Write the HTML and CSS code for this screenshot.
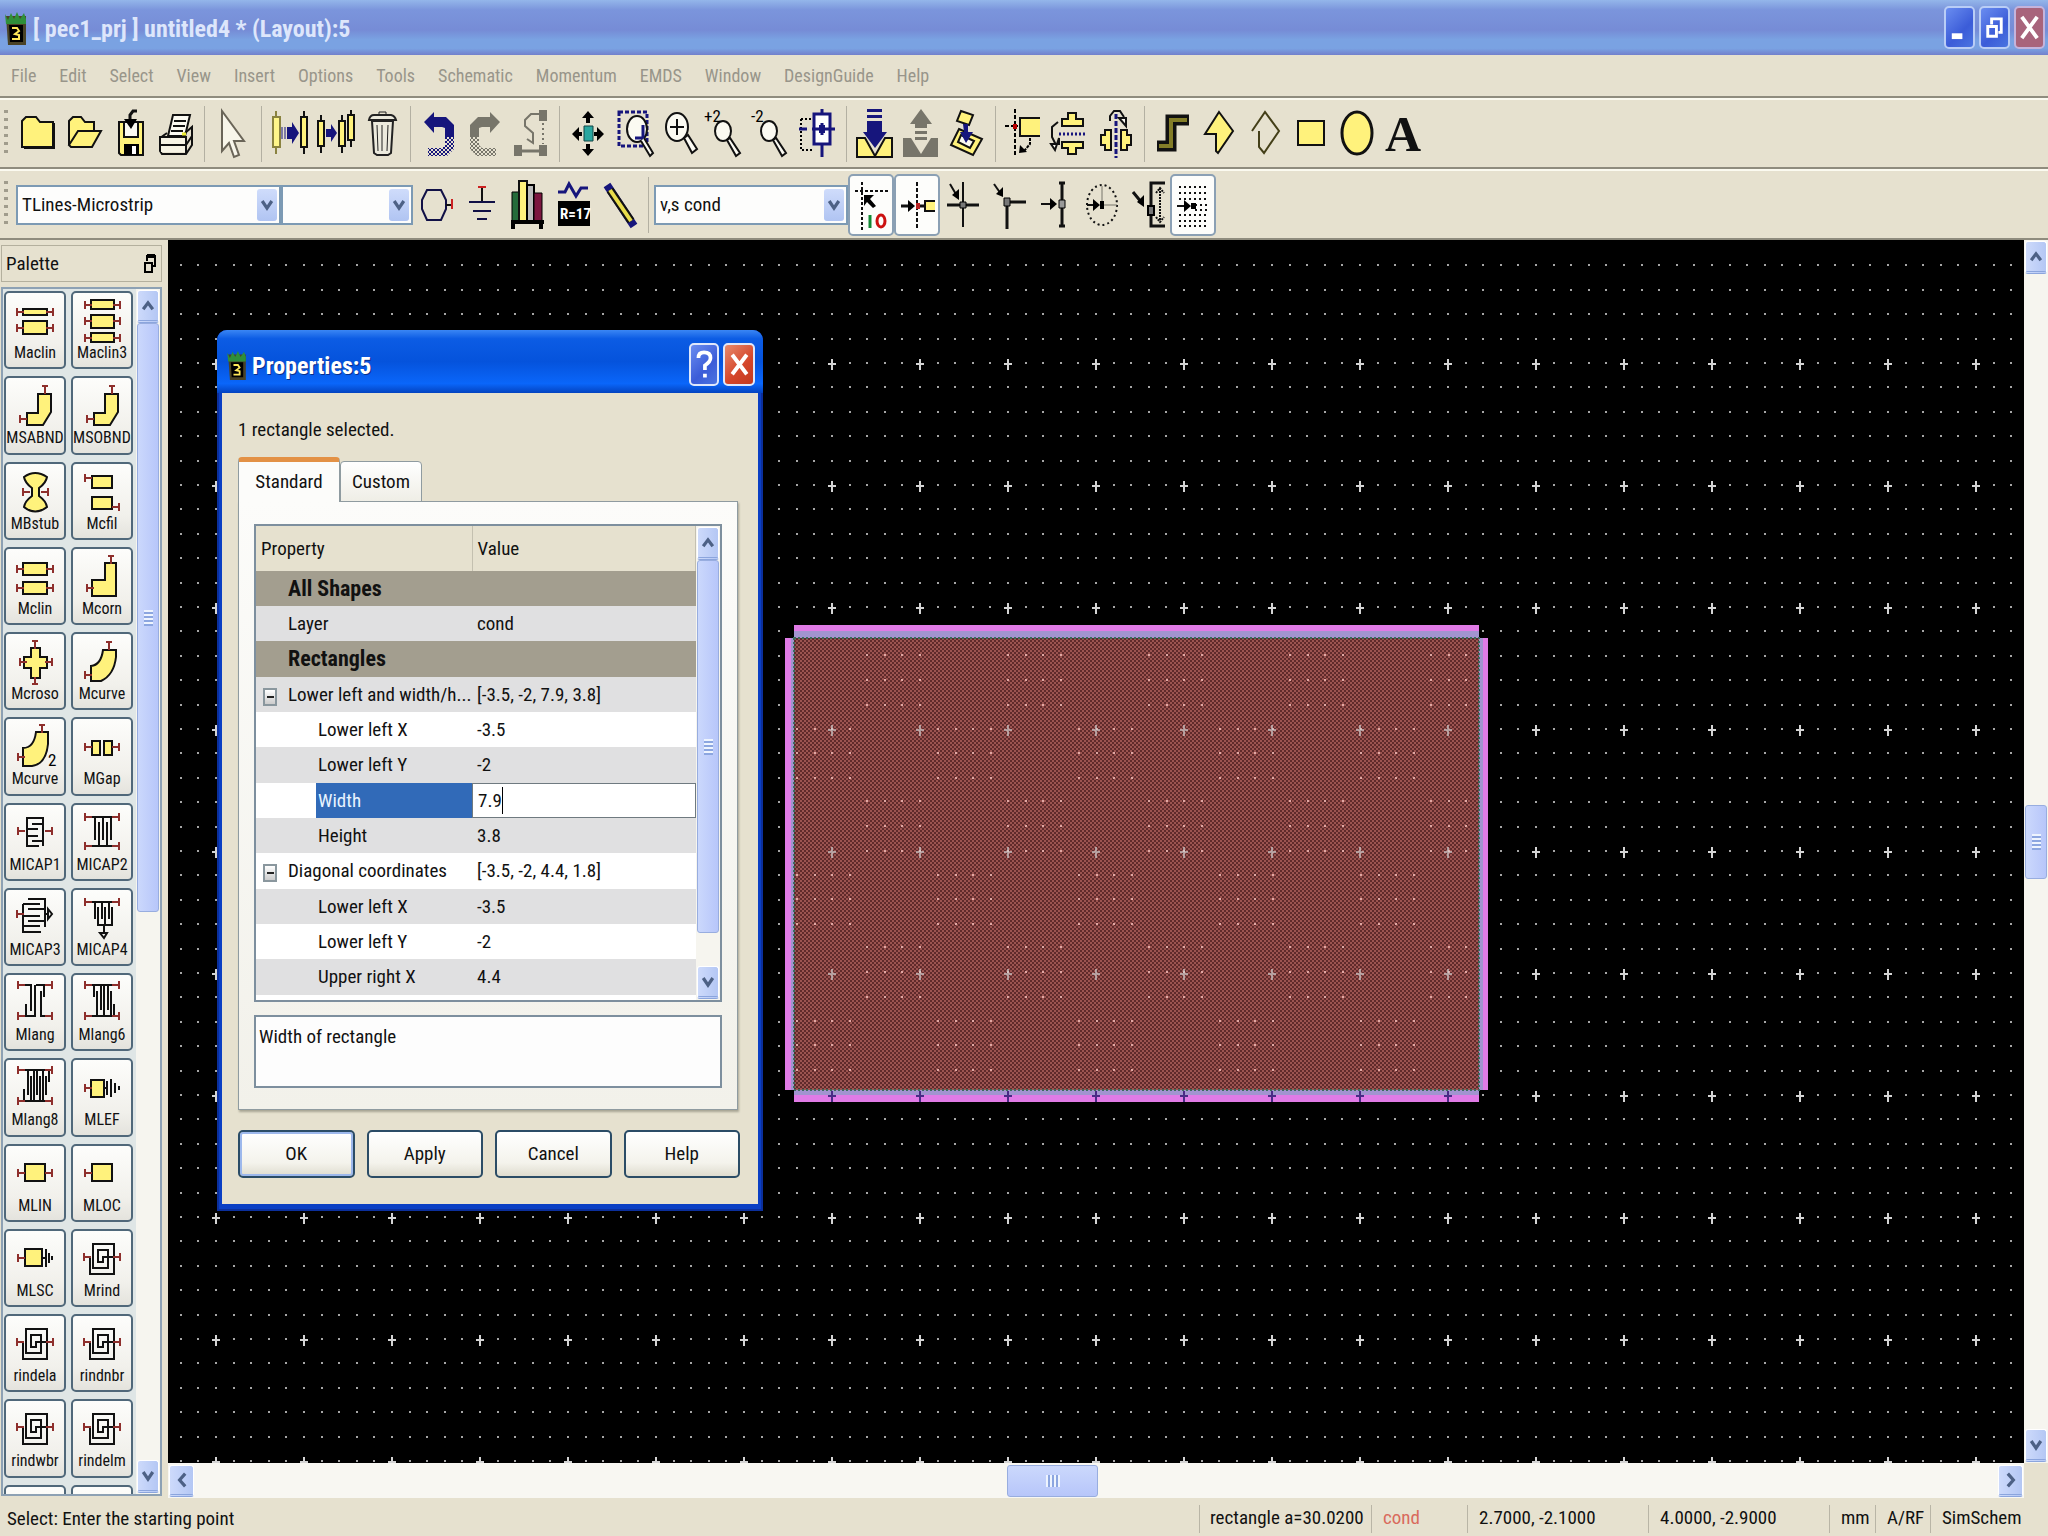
FILE: index.html
```html
<!DOCTYPE html>
<html lang="en">
<head>
<meta charset="utf-8">
<title>[ pec1_prj ] untitled4 * (Layout):5</title>
<link rel="stylesheet" href="styles.css">
</head>
<body>
<svg class="defs" aria-hidden="true">
  <defs>
    <g id="pl" class="pin"><path d="M0 0H7M0 -4V4"/></g>
    <g id="pr" class="pin"><path d="M0 0H7M7 -4V4"/></g>
    <g id="pt" class="pin"><path d="M0 0V8M-3 0H3"/></g>
    <g id="pb" class="pin"><path d="M0 0V7M-3 7H3"/></g>
    <symbol id="up" viewBox="0 0 20 20"><path d="M4 14L10 6L16 14" fill="none" stroke="#4d6185" stroke-width="4"/></symbol>
    <symbol id="down" viewBox="0 0 20 20"><path d="M4 5L10 14L16 5" fill="none" stroke="#4d6185" stroke-width="4"/></symbol>
    <symbol id="left" viewBox="0 0 20 20"><path d="M14 2L7 10L14 18" fill="none" stroke="#4d6185" stroke-width="4"/></symbol>
    <symbol id="right" viewBox="0 0 20 20"><path d="M6 2L13 10L6 18" fill="none" stroke="#4d6185" stroke-width="4"/></symbol>
    <symbol id="app" viewBox="0 0 22 34"><path d="M1 5H21V34H3Z" fill="#4a4326"/><path d="M0 3L3 9L6 2L9 8L12 1L15 8L19 2L21 8V13H1Z" fill="#2f8f3a"/><path d="M4 14H18V31H5Z" fill="#000"/><path d="M7 17L12 17L14 20L10 23L14 24V28H7" fill="none" stroke="#ffe95a" stroke-width="2"/></symbol>
    <symbol id="ind" viewBox="0 0 62 52"><path d="M16 27H19V44H43V14H22V38H37V20H27V32H32V27H44" class="ln"/><use href="#pl" x="13" y="27"/><use href="#pr" x="42" y="27"/></symbol>
    <symbol id="mag" viewBox="0 0 44 50"><ellipse cx="19" cy="22" rx="8" ry="10" class="w"/><path d="M23 31L32 47L36 44L26 29Z" class="w"/></symbol>
    <pattern id="dither" width="4" height="4" patternUnits="userSpaceOnUse"><path d="M0 0H4V4H0Z" fill="#602a2b"/><path d="M0 0H2V2H0ZM2 2H4V4H2Z" fill="#9c5451"/></pattern>
    <pattern id="half" width="4" height="4" patternUnits="userSpaceOnUse"><path d="M0 0H2V2H0ZM2 2H4V4H2Z" fill="#16157c"/></pattern>
    <pattern id="halfg" width="4" height="4" patternUnits="userSpaceOnUse"><path d="M0 0H2V2H0ZM2 2H4V4H2Z" fill="#77756a"/></pattern>
  </defs>
</svg>

<div class="window">
  <header class="titlebar">
    <svg class="app-icon"><use href="#app"/></svg>
    <h1>[ pec1_prj ] untitled4 * (Layout):5</h1>
    <div class="winbtns">
      <button class="wb" aria-label="Minimize"><svg viewBox="0 0 28 40"><path d="M6 26H17V32H6Z" fill="#fff"/></svg></button>
      <button class="wb" aria-label="Restore"><svg viewBox="0 0 28 40"><path d="M11 17V11H21V25H18M11 11H21" fill="none" stroke="#fff" stroke-width="3"/><path d="M7 19H16V29H7Z" fill="none" stroke="#fff" stroke-width="3"/></svg></button>
      <button class="wb close dim" aria-label="Close"><svg viewBox="0 0 28 40"><path d="M6 9L22 31M22 9L6 31" stroke="#fff" stroke-width="4"/></svg></button>
    </div>
  </header>

  <nav class="menubar">
    <a href="#">File</a><a href="#">Edit</a><a href="#">Select</a><a href="#">View</a><a href="#">Insert</a><a href="#">Options</a><a href="#">Tools</a><a href="#">Schematic</a><a href="#">Momentum</a><a href="#">EMDS</a><a href="#">Window</a><a href="#">DesignGuide</a><a href="#">Help</a>
  </nav>

  <div class="toolbar">
    <span class="grip"></span>
    <button class="tb" aria-label="New"><svg viewBox="0 0 44 50"><path d="M6 12L10 8H20L24 13H37V38H6Z" class="y"/><path d="M8 39H38V14" class="k"/></svg></button>
    <button class="tb" aria-label="Open"><svg viewBox="0 0 44 50"><path d="M7 36V12L11 8H19L23 13H32V21" class="y"/><path d="M7 36L16 22H39L30 38H9Z" class="y"/></svg></button>
    <button class="tb" aria-label="Save"><svg viewBox="0 0 44 50"><path d="M11 13H35V46H13L11 44Z" class="y"/><path d="M16 13H30V28H16Z" class="w"/><path d="M16 35H31V46H16Z" fill="#000"/><path d="M24 37H28V45H24Z" fill="#fff"/><path d="M29 2H25L22 6V12" class="k3"/><path d="M16 10H29L23 20Z"/></svg></button>
    <button class="tb" aria-label="Print"><svg viewBox="0 0 44 50"><path d="M14 27L19 6H36L31 27Z" class="w"/><path d="M20 12H32M19 17H31M17 22H29" class="k"/><path d="M6 29L13 24M31 24L38 18V36L32 45H8L6 42V28H32V44M6 36H32L38 27" class="k"/><path d="M7 29H31V35H7ZM7 37H31V43H7Z" fill="#f6f3e4"/><path d="M28 25H32" stroke="#ee3" stroke-width="3"/></svg></button>
    <i class="sep"></i>
    <button class="tb" aria-label="Select"><svg viewBox="0 0 44 50"><path d="M11 2V42L18 34L23 48L28 46L23 32H33Z" fill="#f8f6ea" stroke="#6a6558" stroke-width="2"/></svg></button>
    <i class="sep"></i>
    <button class="tb" aria-label="Move"><svg viewBox="0 0 44 50"><path d="M8 2V8M8 38V45" stroke="#8a8340" stroke-width="2"/><path d="M5 8H12V38H5Z" fill="#fff68a" stroke="#8a8340" stroke-width="2"/><path d="M14 18V30M17 18V30" stroke="#16157c" stroke-width="1"/><path d="M19 18H24V13L31 24L24 35V30H19Z" fill="#16157c"/><path d="M36 2V8M36 38V45" class="k"/><path d="M33 8H39V38H33Z" class="y"/></svg></button>
    <button class="tb" aria-label="Copy"><svg viewBox="0 0 44 50"><path d="M7 6V12M7 37V44M28 6V12M28 37V44M37 1V6M37 31V38" class="k"/><path d="M4 12H10V37H4ZM25 12H31V37H25ZM34 6H40V31H34Z" class="y"/><path d="M12 20H17V15L23 24L17 33V28H12Z" fill="#16157c"/></svg></button>
    <button class="tb" aria-label="Delete"><svg viewBox="0 0 44 50"><path d="M12 12H33L31 44L28 46H17L14 44Z" fill="#eceadd" stroke="#222" stroke-width="2"/><path d="M9 11Q10 6 14 6H31Q35 7 36 11Z" fill="#eceadd" stroke="#222" stroke-width="2"/><path d="M19 6V3H26V6M17 16L18 42M22 16V42M28 16L27 42" fill="none" stroke="#222"/></svg></button>
    <i class="sep"></i>
    <button class="tb" aria-label="Undo"><svg viewBox="0 0 44 50"><path d="M7 13L17 3V8H29L37 16V28H28V19L25 18H17V24Z" fill="#16157c"/><path d="M28 28H37V40L30 47H11V39H25L28 36Z" fill="url(#half)"/></svg></button>
    <button class="tb" aria-label="Redo"><svg viewBox="0 0 44 50"><path d="M37 13L27 3V8H15L7 16V28H16V19L19 18H27V24Z" fill="#77756a"/><path d="M16 28H7V40L14 47H33V39H19L16 36Z" fill="url(#halfg)"/></svg></button>
    <button class="tb" aria-label="Swap"><svg viewBox="0 0 44 50"><path d="M30 1H38V12H30ZM5 36H13V47H5ZM30 36H38V47H30Z" fill="#77756a"/><path d="M13 42H30" stroke="#77756a" stroke-width="3"/><path d="M30 5H22L16 11V17L24 24V34M18 30L24 34V26" fill="none" stroke="#77756a" stroke-width="2"/><path d="M34 14V35" stroke="#77756a" stroke-width="2" stroke-dasharray="2 3"/></svg></button>
    <i class="sep"></i>
    <button class="tb" aria-label="View all"><svg viewBox="0 0 44 50"><path d="M18 17H27V32H18Z" fill="#2aa7a0" stroke="#144" stroke-width="1"/><path d="M22 2L28 9H24V14H20V9H16ZM22 47L28 40H24V35H20V40H16ZM6 25L13 18V23H16V27H13V32ZM38 25L31 18V23H28V27H31V32Z"/></svg></button>
    <button class="tb" aria-label="Zoom area"><svg viewBox="0 0 44 50"><path d="M7 3H35V37H7Z" fill="none" stroke="#16157c" stroke-width="3" stroke-dasharray="4 2"/><ellipse cx="25" cy="20" rx="10" ry="13" class="w"/><path d="M31 16V29H23" fill="none" stroke="#16157c" stroke-width="3"/><path d="M29 32L38 47L41 44L32 29" class="w"/></svg></button>
    <button class="tb" aria-label="Zoom in"><svg viewBox="0 0 44 50"><ellipse cx="19" cy="18" rx="11" ry="14" class="w"/><path d="M12 18H26M19 10V26" class="k"/><path d="M26 29L34 44L39 40L30 26Z" class="w"/></svg></button>
    <button class="tb" aria-label="Zoom in by 2"><svg viewBox="0 0 44 50"><use href="#mag" width="44" height="50"/><text x="0" y="13" class="zt">+2</text></svg></button>
    <button class="tb" aria-label="Zoom out by 2"><svg viewBox="0 0 44 50"><use href="#mag" width="44" height="50"/><text x="1" y="13" class="zt">-2</text></svg></button>
    <button class="tb" aria-label="Center view"><svg viewBox="0 0 44 50"><path d="M5 10H18M5 10V41H18" fill="none" stroke="#000" stroke-width="2" stroke-dasharray="2 2"/><path d="M18 5H34V35H18Z" fill="#fff" stroke="#16157c" stroke-width="3"/><path d="M3 20H11M16 20H39M26 0V5M26 14V26M26 35V48" stroke="#16157c" stroke-width="3"/><path d="M23 16H29V24H23Z" fill="#16157c"/></svg></button>
    <i class="sep"></i>
    <button class="tb" aria-label="Push"><svg viewBox="0 0 44 50"><path d="M4 29L12 29L22 47L32 29H39V48H4Z" class="y"/><path d="M14 0H29V3H14ZM14 6H29V9H14ZM14 12H29V23H34L22 39L10 23H14Z" fill="#16157c"/></svg></button>
    <button class="tb" aria-label="Pop"><svg viewBox="0 0 44 50"><path d="M4 29H12L22 45L32 29H39V48H4Z" fill="#77756a"/><path d="M22 0L33 15H28V19H16V15H11ZM16 22H28V25H16ZM16 28H28V31H16Z" fill="#77756a"/></svg></button>
    <button class="tb" aria-label="Layers"><svg viewBox="0 0 44 50"><path d="M16 2L28 6L24 16L12 12ZM14 20L37 30L28 46L6 36Z" class="y"/><path d="M16 26L29 32L25 39L13 33Z" class="w"/><path d="M18 15H23V23H28L21 34L15 23H19Z" fill="#16157c"/></svg></button>
    <i class="sep"></i>
    <button class="tb" aria-label="Rotate"><svg viewBox="0 0 44 50"><path d="M38 9H18V27H38" class="y"/><path d="M13 0V48M3 17H16" fill="none" stroke="#000" stroke-width="2" stroke-dasharray="4 2"/><path d="M11 15H15V20H11Z" fill="#b00"/><path d="M28 29V35L22 42" fill="none" stroke="#000" stroke-width="2" stroke-dasharray="3 1"/><path d="M17 44L18 36L25 43Z"/></svg></button>
    <button class="tb" aria-label="Mirror X"><svg viewBox="0 0 44 50"><path d="M20 4H28V10H35V17H14V10H20ZM14 33H35V39H28V45H20V39H14Z" class="y"/><path d="M11 25H38" stroke="#16157c" stroke-width="3" stroke-dasharray="2 2"/><path d="M10 13L4 18V28L8 36" class="k"/><path d="M3 35H11V29L7 41Z" class="w"/></svg></button>
    <button class="tb" aria-label="Mirror Y"><svg viewBox="0 0 44 50"><path d="M11 21H17V41H11V36H7V26H11ZM27 21H33V26H37V36H33V41H27Z" class="y"/><path d="M22 5V49" stroke="#16157c" stroke-width="3" stroke-dasharray="5 2"/><path d="M16 12V7L20 2H26L30 8" class="k"/><path d="M25 9H32V17Z" class="w"/></svg></button>
    <i class="sep"></i>
    <button class="tb" aria-label="Trace"><svg viewBox="0 0 44 50"><path d="M6 37H20V11H38" fill="none" stroke="#111" stroke-width="11"/><path d="M8 37H20V11H36" fill="none" stroke="#837d28" stroke-width="4"/></svg></button>
    <button class="tb" aria-label="Polygon"><svg viewBox="0 0 44 50"><path d="M22 3L36 22L21 44L19 42V25H8Z" class="y"/></svg></button>
    <button class="tb" aria-label="Polyline"><svg viewBox="0 0 44 50"><path d="M9 22L22 3L36 22L21 44L16 38V22" fill="none" stroke="#443f18" stroke-width="2"/></svg></button>
    <button class="tb" aria-label="Rectangle"><svg viewBox="0 0 44 50"><path d="M9 12H35V36H9Z" class="y"/></svg></button>
    <button class="tb" aria-label="Circle"><svg viewBox="0 0 44 50"><ellipse cx="22" cy="24" rx="15" ry="21" fill="#fff27c" stroke="#111" stroke-width="3"/></svg></button>
    <button class="tb" aria-label="Text"><span class="glyph-a">A</span></button>
  </div>

  <div class="toolbar second">
    <span class="grip"></span>
    <span class="combo c1"><select aria-label="Palette"><option>TLines-Microstrip</option></select><svg><use href="#down"/></svg></span>
    <span class="combo c2"><select aria-label="Component history"><option></option></select><svg><use href="#down"/></svg></span>
    <button class="tb" aria-label="Port"><svg viewBox="0 0 44 50"><path d="M13 10H27L32 20V29L27 40H13L8 29V20Z" fill="none" stroke="#111046" stroke-width="2"/><path d="M32 25H38" class="k"/><path d="M38 19V29" stroke="#c22" stroke-width="2"/></svg></button>
    <button class="tb" aria-label="Ground"><svg viewBox="0 0 44 50"><path d="M22 8V22" class="k"/><path d="M9 22H35M13 31H31M17 39H27" stroke="#111046" stroke-width="2"/><path d="M18 7H26" stroke="#c22" stroke-width="2"/></svg></button>
    <button class="tb" aria-label="Library"><svg viewBox="0 0 44 50"><path d="M6 12H13V41H6Z" fill="#246b3a" stroke="#000"/><path d="M13 1H21V41H13Z" class="y"/><path d="M21 5H28V41H21Z" fill="#bbb" stroke="#000" stroke-width="2"/><path d="M28 13H36V41H28Z" fill="#7c163f" stroke="#000"/><path d="M5 42H38M7 42V49M35 42V49" stroke="#000" stroke-width="4"/></svg></button>
    <button class="tb" aria-label="Variable"><svg viewBox="0 0 44 50"><path d="M6 12H13L17 4L24 16L29 8H36" fill="none" stroke="#16157c" stroke-width="3"/><path d="M6 21H38V46H6Z"/><text x="8" y="39" class="rt">R=17</text></svg></button>
    <button class="tb" aria-label="Wire"><svg viewBox="0 0 44 50"><path d="M9 5L36 46" stroke="#16157c" stroke-width="8"/><path d="M12 10L33 41" stroke="#111" stroke-width="8"/><path d="M12 10L33 41" stroke="#e8dc4c" stroke-width="4"/></svg></button>
    <i class="sep"></i>
    <span class="combo c3"><select aria-label="Entry layer"><option>v,s cond</option></select><svg><use href="#down"/></svg></span>
    <button class="tb on" aria-label="Snap"><svg viewBox="0 0 44 62"><path d="M6 17H40M13 8V58" fill="none" stroke="#111" stroke-width="2" stroke-dasharray="3 2"/><path d="M15 21H25L21 25L27 32L24 34L18 28L15 32Z"/><path d="M21 41V54" stroke="#183" stroke-width="3"/><ellipse cx="32" cy="47" rx="4" ry="6" fill="none" stroke="#c11" stroke-width="3"/></svg></button>
    <button class="tb on" aria-label="Pin snap"><svg viewBox="0 0 44 62"><path d="M22 8V56" stroke="#111" stroke-width="2" stroke-dasharray="4 2"/><path d="M40 27H30V37H40" class="y"/><path d="M6 32H17M25 32H30" class="k3"/><path d="M13 26L20 32L13 38Z"/><path d="M21 29H25V35H21Z" fill="#b22"/></svg></button>
    <button class="tb" aria-label="Vertex snap"><svg viewBox="0 0 44 50"><path d="M6 25H38" class="k3"/><path d="M22 2V47M9 4L16 16" class="k"/><path d="M19 22H25V28H19Z" fill="#777" stroke="#000"/><path d="M18 9V20L11 15Z"/></svg></button>
    <button class="tb" aria-label="Corner snap"><svg viewBox="0 0 44 50"><path d="M20 49V22H39" fill="none" stroke="#111" stroke-width="3"/><path d="M7 4L14 14" class="k"/><path d="M17 18H23V26H17Z" fill="#777" stroke="#000"/><path d="M16 7V17L9 14Z"/></svg></button>
    <button class="tb" aria-label="Edge snap"><svg viewBox="0 0 44 50"><path d="M29 3V46M26 3H32M26 46H32" class="k3"/><path d="M8 24H19" class="k"/><path d="M17 18L24 24L17 30Z"/><path d="M26 20H32V28H26Z" fill="#999" stroke="#000"/></svg></button>
    <button class="tb" aria-label="Arc snap"><svg viewBox="0 0 44 50"><ellipse cx="23" cy="25" rx="15" ry="20" fill="none" stroke="#111" stroke-width="2" stroke-dasharray="2 3"/><path d="M23 6V25H38" fill="none" stroke="#77756a"/><path d="M8 25H16" class="k"/><path d="M14 19L21 25L14 31ZM21 21H25V29H21Z"/></svg></button>
    <button class="tb" aria-label="Intersect snap"><svg viewBox="0 0 44 50"><path d="M40 3H26V46H40M8 12L17 23" class="k3"/><path d="M35 8V41M31 13L35 8L39 13M31 37L35 42L39 37" fill="none" stroke="#111" stroke-dasharray="2 1" stroke-width="2"/><path d="M19 15V27L12 22Z"/><path d="M23 26H29V35H23Z" fill="#777" stroke="#000" stroke-width="2"/></svg></button>
    <button class="tb on" aria-label="Grid snap"><svg viewBox="0 0 44 62"><path d="M8 13H38M8 19H38M8 25H38M24 31H38M24 36H38M8 41H38M8 47H38M8 52H38" fill="none" stroke="#111" stroke-width="2" stroke-dasharray="2 3"/><path d="M6 32H14" class="k"/><path d="M13 26L20 32L13 38ZM20 29H25V35H20Z"/></svg></button>
  </div>

  <main class="work">
    <aside class="palette">
      <div class="pal-head"><h2>Palette</h2><button class="float" aria-label="Float palette"><svg viewBox="0 0 14 20"><path d="M4 7V2H12V12H9" fill="none" stroke="#000" stroke-width="2"/><path d="M4 2H12" stroke="#000" stroke-width="4"/><path d="M2 9H9V18H2Z" fill="none" stroke="#000" stroke-width="2"/></svg></button></div>
      <div class="pal-list">
        <div class="pal-grid">
          <button><svg viewBox="0 0 62 52"><path d="M19 17H43V23H19ZM19 29H43V42H19Z" class="y"/><use href="#pl" x="13" y="20"/><use href="#pr" x="42" y="20"/><use href="#pl" x="13" y="36"/><use href="#pr" x="42" y="36"/></svg>Maclin</button>
          <button><svg viewBox="0 0 62 52"><path d="M20 8H43V17H20ZM20 23H43V36H20ZM20 41H43V50H20Z" class="y"/><use href="#pl" x="14" y="13"/><use href="#pr" x="42" y="13"/><use href="#pl" x="14" y="29"/><use href="#pr" x="42" y="29"/><use href="#pl" x="14" y="46"/><use href="#pr" x="42" y="46"/></svg>Maclin3</button>
          <button><svg viewBox="0 0 62 52"><path d="M34 17H47V35L39 48H23V36H34Z" class="y"/><use href="#pt" x="41" y="9"/><use href="#pl" x="16" y="42"/></svg>MSABND</button>
          <button><svg viewBox="0 0 62 52"><path d="M34 17H47V35L39 48H23V36H34Z" class="y"/><use href="#pt" x="41" y="9"/><use href="#pl" x="16" y="42"/></svg>MSOBND</button>
          <button><svg viewBox="0 0 62 52"><path d="M20 14Q31 6 43 14Q42 20 35 25V33Q42 38 43 44Q31 53 20 44Q21 38 28 33V25Q21 20 20 14Z" class="y"/><use href="#pl" x="19" y="29"/><use href="#pr" x="37" y="29"/></svg>MBstub</button>
          <button><svg viewBox="0 0 62 52"><path d="M21 13H41V25H21ZM21 34H41V46H21Z" class="y"/><use href="#pl" x="14" y="15"/><use href="#pr" x="41" y="44"/></svg>Mcfil</button>
          <button><svg viewBox="0 0 62 52"><path d="M19 15H43V27H19ZM19 34H43V46H19Z" class="y"/><use href="#pl" x="13" y="21"/><use href="#pr" x="42" y="21"/><use href="#pl" x="13" y="40"/><use href="#pr" x="42" y="40"/></svg>Mclin</button>
          <button><svg viewBox="0 0 62 52"><path d="M34 15H45V48H21V32H34Z" class="y"/><use href="#pt" x="40" y="8"/><use href="#pl" x="16" y="40"/></svg>Mcorn</button>
          <button><svg viewBox="0 0 62 52"><path d="M27 15H36V24H43V35H36V45H27V35H20V24H27Z" class="y"/><use href="#pt" x="31" y="8"/><use href="#pb" x="31" y="44"/><use href="#pl" x="16" y="29"/><use href="#pr" x="41" y="29"/></svg>Mcroso</button>
          <button><svg viewBox="0 0 62 52"><path d="M32 17H45V24Q43 42 30 48H20V33Q30 32 32 17Z" class="y"/><use href="#pt" x="38" y="9"/><use href="#pl" x="14" y="42"/></svg>Mcurve</button>
          <button><svg viewBox="0 0 62 52"><path d="M32 14H44V26Q42 46 28 48H19V30Q30 30 32 14Z" class="y"/><use href="#pt" x="38" y="7"/><use href="#pl" x="14" y="39"/><text x="44" y="48" class="zt">2</text></svg>Mcurve</button>
          <button><svg viewBox="0 0 62 52"><path d="M21 23H29V37H21ZM33 23H41V37H33Z" class="y"/><use href="#pl" x="14" y="29"/><use href="#pr" x="41" y="29"/></svg>MGap</button>
          <button><svg viewBox="0 0 62 52"><path d="M23 13V42H35M23 14H28M23 25H34M23 32H34M28 14H39V42M28 20H39M28 37H39" class="ln"/><use href="#pl" x="14" y="27"/><use href="#pr" x="41" y="27"/></svg>MICAP1</button>
          <button><svg viewBox="0 0 62 52"><path d="M16 13H47M16 42H47M24 13V36M28 18V42M32 13V36M36 18V42M40 13V36" class="ln"/><use href="#pl" x="14" y="13"/><use href="#pr" x="41" y="13"/><use href="#pl" x="14" y="42"/><use href="#pr" x="41" y="42"/></svg>MICAP2</button>
          <button><svg viewBox="0 0 62 52"><path d="M37 43H19V15M19 15H36M19 27H36M19 37H36M24 10H41V38M24 20H41M24 32H41M41 25H44M44 20V30L48 25Z" class="ln"/><use href="#pl" x="13" y="25"/></svg>MICAP3</button>
          <button><svg viewBox="0 0 62 52"><path d="M16 13H47M24 13V30M31 13V30M38 13V30M27 18V36H41V18M34 18V36M33 36V44M29 44H36L33 49Z" class="ln"/><use href="#pl" x="14" y="13"/><use href="#pr" x="41" y="13"/></svg>MICAP4</button>
          <button><svg viewBox="0 0 62 52"><path d="M16 11H27V37M32 11H47M16 42H31V11M40 11V23M37 17V42H47M22 30V42" class="ln"/><use href="#pl" x="14" y="11"/><use href="#pr" x="41" y="11"/><use href="#pl" x="14" y="42"/><use href="#pr" x="41" y="42"/></svg>Mlang</button>
          <button><svg viewBox="0 0 62 52"><path d="M16 11H47M16 42H47M23 11V23M26 17V42M30 11V36M33 11V42M37 11V36M40 17V42M43 30V42" class="ln"/><use href="#pl" x="14" y="11"/><use href="#pr" x="41" y="11"/><use href="#pl" x="14" y="42"/><use href="#pr" x="41" y="42"/></svg>Mlang6</button>
          <button><svg viewBox="0 0 62 52"><path d="M16 11H47M16 42H47M20 30V42M24 11V36M27 17V42M30 11V42M33 11V36M36 17V42M39 11V42M42 17V36M45 11V23" class="ln"/><use href="#pl" x="14" y="11"/><use href="#pr" x="41" y="11"/><use href="#pl" x="14" y="42"/><use href="#pr" x="41" y="42"/></svg>Mlang8</button>
          <button><svg viewBox="0 0 62 52"><path d="M20 21H33V38H20Z" class="y"/><path d="M33 29H37M36 22V36M40 20V38M44 24V34M48 27V31" class="ln"/><use href="#pl" x="14" y="29"/></svg>MLEF</button>
          <button><svg viewBox="0 0 62 52"><path d="M21 19H41V36H21Z" class="y"/><use href="#pl" x="14" y="28"/><use href="#pr" x="41" y="28"/></svg>MLIN</button>
          <button><svg viewBox="0 0 62 52"><path d="M21 19H41V36H21Z" class="y"/><use href="#pl" x="14" y="28"/></svg>MLOC</button>
          <button><svg viewBox="0 0 62 52"><path d="M21 19H38V36H21Z" class="y"/><path d="M38 28H42M42 19V37M45 23V33M48 26V30" class="ln"/><use href="#pl" x="14" y="28"/></svg>MLSC</button>
          <button><svg><use href="#ind"/></svg>Mrind</button>
          <button><svg><use href="#ind"/></svg>rindela</button>
          <button><svg><use href="#ind"/></svg>rindnbr</button>
          <button><svg><use href="#ind"/></svg>rindwbr</button>
          <button><svg><use href="#ind"/></svg>rindelm</button>
          <button aria-label="More"></button>
          <button aria-label="More"></button>
        </div>
        <div class="vscroll slim">
          <button class="sb" aria-label="Scroll up"><svg><use href="#up"/></svg></button>
          <div class="thumb t-pal"></div>
          <button class="sb end" aria-label="Scroll down"><svg><use href="#down"/></svg></button>
        </div>
      </div>
    </aside>

    <section class="view">
      <div class="canvas">
        <svg class="grid" width="100%" height="100%">
          <defs>
            <pattern id="dots" x="47" y="122" width="88" height="122" patternUnits="userSpaceOnUse">
              <path d="M0 1H88M0 25H88M0 50H88M0 74H88M0 99H88" stroke="#a6a6a6" stroke-width="2" stroke-dasharray="2 16 2 15 2 16 2 15 2 16"/>
            </pattern>
            <pattern id="cross" x="42" y="116" width="88" height="122" patternUnits="userSpaceOnUse">
              <path d="M2 8H10M6 3V14" stroke="#d4d4d4" stroke-width="2"/>
            </pattern>
            <pattern id="inner" x="698" y="414" width="141" height="146" patternUnits="userSpaceOnUse">
              <path d="M0 1H56M0 26H56M0 51H56" stroke="#e0a8a4" stroke-width="2" stroke-dasharray="2 16 2 15 2 16 2 40"/>
              <path d="M71 75H127M71 99H127M71 124H127" stroke="#e0a8a4" stroke-width="2" stroke-dasharray="2 16 2 15 2 16 2 40"/>
            </pattern>
          </defs>
          <rect x="8" y="8" width="100%" height="100%" fill="url(#dots)"/>
          <rect x="8" y="8" width="100%" height="100%" fill="url(#cross)"/>
          <path d="M626 385H1311V398H626ZM617 398H626V850H617ZM1311 398H1320V850H1311ZM626 850H1311V862H626Z" fill="#e07be6"/>
          <path d="M626 391H1311V398H626ZM623 398H626V850H623ZM1311 398H1315V850H1311ZM626 850H1311V855H626Z" fill="#a294d0"/>
          <rect x="626" y="398" width="685" height="452" fill="url(#dither)"/>
          <rect x="626" y="398" width="685" height="452" fill="url(#inner)"/>
          <rect x="634" y="440" width="677" height="360" fill="url(#cross)" opacity=".65"/>
          <path d="M626 398H1311V850H626Z" fill="none" stroke="#3c6b5c" stroke-width="2" stroke-dasharray="2 2"/>
          <path d="M660 856H668M664 851V862M748 856H756M752 851V862M836 856H844M840 851V862M924 856H932M928 851V862M1012 856H1020M1016 851V862M1100 856H1108M1104 851V862M1188 856H1196M1192 851V862M1276 856H1284M1280 851V862" stroke="#4a2a86" stroke-width="2"/>
        </svg>
      </div>
      <div class="vscroll">
        <button class="sb" aria-label="Scroll up"><svg><use href="#up"/></svg></button>
        <div class="thumb t-view"></div>
        <button class="sb end" aria-label="Scroll down"><svg><use href="#down"/></svg></button>
      </div>
      <div class="hscroll">
        <button class="sb" aria-label="Scroll left"><svg><use href="#left"/></svg></button>
        <div class="thumb h t-h"></div>
        <button class="sb end" aria-label="Scroll right"><svg><use href="#right"/></svg></button>
      </div>
    </section>
  </main>

  <footer class="status">
    <p>Select: Enter the starting point</p>
    <span class="s1">rectangle a=30.0200</span><span class="s2">cond</span><span class="s3">2.7000, -2.1000</span><span class="s3">4.0000, -2.9000</span><span class="s5">mm</span><span class="s6">A/RF</span><span class="s7">SimSchem</span>
  </footer>
</div>

<section class="dialog" role="dialog" aria-labelledby="dlg-title">
  <header class="dlg-title">
    <svg class="app-icon"><use href="#app"/></svg>
    <h2 id="dlg-title">Properties:5</h2>
    <button class="wb" aria-label="Help"><svg viewBox="0 0 28 40"><path d="M8 13Q8 7 14 7Q21 7 21 13Q21 17 15 21V26M15 30V34" fill="none" stroke="#fff" stroke-width="4"/></svg></button>
    <button class="wb close" aria-label="Close"><svg viewBox="0 0 28 40"><path d="M7 10L22 30M22 10L7 30" stroke="#fff" stroke-width="4"/></svg></button>
  </header>
  <div class="dlg-body">
    <p class="lead">1 rectangle selected.</p>
    <div class="tabs" role="tablist"><button role="tab" class="tab active" aria-selected="true">Standard</button><button role="tab" class="tab" aria-selected="false">Custom</button></div>
    <div class="panel">
      <div class="props">
        <div class="props-main">
          <table>
            <colgroup><col class="cn"><col></colgroup>
            <thead><tr><th>Property</th><th>Value</th></tr></thead>
            <tbody>
              <tr class="grp"><td colspan="2">All Shapes</td></tr>
              <tr class="alt"><td class="l1">Layer</td><td>cond</td></tr>
              <tr class="grp"><td colspan="2">Rectangles</td></tr>
              <tr class="alt"><td class="node"><button class="tog" aria-label="Collapse"></button>Lower left and width/h...</td><td>[-3.5, -2, 7.9, 3.8]</td></tr>
              <tr><td class="l2">Lower left X</td><td>-3.5</td></tr>
              <tr class="alt"><td class="l2">Lower left Y</td><td>-2</td></tr>
              <tr class="edit"><td class="l2"><label for="width">Width</label></td><td><div class="field"><input id="width" value="7.9"><i></i></div></td></tr>
              <tr class="alt"><td class="l2">Height</td><td>3.8</td></tr>
              <tr><td class="node"><button class="tog" aria-label="Collapse"></button>Diagonal coordinates</td><td>[-3.5, -2, 4.4, 1.8]</td></tr>
              <tr class="alt"><td class="l2">Lower left X</td><td>-3.5</td></tr>
              <tr><td class="l2">Lower left Y</td><td>-2</td></tr>
              <tr class="alt"><td class="l2">Upper right X</td><td>4.4</td></tr>
            </tbody>
          </table>
        </div>
        <div class="vscroll slim">
          <button class="sb" aria-label="Scroll up"><svg><use href="#up"/></svg></button>
          <div class="thumb t-dlg"></div>
          <button class="sb end" aria-label="Scroll down"><svg><use href="#down"/></svg></button>
        </div>
      </div>
      <p class="desc">Width of rectangle</p>
    </div>
    <div class="actions"><button class="default">OK</button><button>Apply</button><button>Cancel</button><button>Help</button></div>
  </div>
</section>
</body>
</html>
```
FILE: styles.css
```css
:root {
  --face: #e6e1cf;
  --line: #8f8c7e;
  --edge: #7d8f9e;
  --ui: "Liberation Sans Narrow", "Roboto Condensed", "Open Sans Condensed", "DejaVu Sans Condensed", sans-serif;
}
* { box-sizing: border-box; }
body { margin: 0; background: var(--face); color: #111; font: 19px/24px var(--ui); }
h1, h2, p { margin: 0; font-weight: normal; }
h2 { font-size: 19px; }
button, input, select { font: inherit; color: inherit; margin: 0; padding: 0; }
button { cursor: default; }
svg { display: block; }
.defs { position: absolute; width: 0; height: 0; }

.window { display: flex; flex-direction: column; height: 100vh; overflow: hidden; }

/* drawing classes shared by the icons */
.y { fill: #fff27c; stroke: #111; stroke-width: 2; }
.w { fill: #fbfaf2; stroke: #111; stroke-width: 2; }
.k { fill: none; stroke: #111; stroke-width: 2; }
.k3 { fill: none; stroke: #111; stroke-width: 3; }
.ln { fill: none; stroke: #111; stroke-width: 2; }
.pin { fill: none; stroke: #8e2f2c; stroke-width: 2; }
.zt { font: 17px/20px var(--ui); }
.rt { font: bold 15px/20px var(--ui); fill: #fff; }

.titlebar {
  flex: none; display: flex; align-items: center; gap: 6px; height: 55px; padding: 0 3px 0 5px;
  background: linear-gradient(#94b6ea 0, #7b95dc 18%, #768cd6 55%, #7aa2e2 72%, #7aa2e2 88%, #7280cc 100%);
}
.app-icon { flex: none; width: 22px; height: 34px; }
.titlebar h1 { flex: 1; padding-top: 3px; color: #dde6fb; font-size: 24px; line-height: 32px; font-weight: bold; }
.winbtns { display: flex; gap: 4px; }
.wb { width: 31px; height: 43px; border: 2px solid #b9cdf6; border-radius: 5px; background: linear-gradient(135deg, #6a8df0, #3b5cd8 60%, #4a74e0); }
.wb svg { width: 100%; height: 100%; }
.wb.close { background: linear-gradient(135deg, #e88a6c, #d4452a 60%, #c23a20); }
.wb.close.dim { background: #a8647c; border-color: #c4b4dc; }

.menubar {
  flex: none; display: flex; gap: 23px; align-items: center; height: 43px; padding: 0 11px;
  border-bottom: 2px solid var(--line); font-size: 18px;
}
.menubar a { color: #98958a; text-decoration: none; }

.toolbar { flex: none; display: flex; align-items: center; height: 71px; padding-left: 4px; border-top: 2px solid #fbfaf0; border-bottom: 2px solid var(--line); }
.grip { width: 4px; height: 48px; margin-right: 7px; background: repeating-linear-gradient(#a09c8c 0 3px, transparent 3px 8px); }
.tb { flex: none; width: 46px; height: 62px; border: 1px solid transparent; border-radius: 5px; background: none; display: flex; align-items: center; justify-content: center; }
.tb svg { width: 44px; height: 50px; overflow: visible; }
.tb.on { background: #fdfdfb; border: 2px solid #8ba0b4; }
.tb.on svg { height: 62px; margin: -2px; }
.sep { flex: none; width: 1px; height: 56px; margin: 0 5px; background: #b3b0a2; }
.glyph-a { font: bold 50px/48px "Liberation Serif", serif; }

.second .grip { margin-right: 8px; }
.combo { flex: none; display: flex; align-items: center; height: 40px; border: 2px solid #7c9ab4; background: #fdfdfc; }
.combo select { flex: 1; min-width: 0; height: 36px; padding-left: 4px; border: 0; background: none; appearance: none; }
.combo svg { width: 20px; height: 32px; margin-right: 2px; padding: 6px 2px; border-radius: 3px; background: linear-gradient(#cfdcfb, #b0c4f2); }
.c1 { width: 265px; }
.c2 { width: 132px; }
.c3 { width: 194px; }

.work { flex: 1; min-height: 0; display: flex; }
.palette { flex: none; display: flex; flex-direction: column; width: 168px; padding: 5px 6px 2px 1px; }
.pal-head { flex: none; display: flex; align-items: center; justify-content: space-between; height: 37px; padding: 0 4px; border: 1px solid #b4b09e; }
.float { width: 14px; height: 22px; border: 0; background: none; }
.pal-list { flex: 1; min-height: 0; display: flex; margin-top: 5px; border: 2px solid #8da1b4; overflow: hidden; background: #dfe6e6; }
.pal-grid { flex: 1; display: grid; grid-template-columns: 62px 62px; grid-template-rows: repeat(15, 1fr); gap: 7px 5px; padding: 2px 0 0 1px; margin-bottom: -69px; }
.pal-grid button {
  min-height: 0; padding: 0; border: 2px solid #50687a; border-radius: 5px; overflow: hidden;
  background: linear-gradient(#fdfdfb, #f1f0eb 70%, #e4e3dd); font-size: 16px; line-height: 18px;
  display: flex; flex-direction: column; align-items: center; justify-content: flex-start;
}
.pal-grid svg { flex: none; width: 62px; height: 52px; margin: -1px 0 0; }

.vscroll { flex: none; display: flex; flex-direction: column; width: 24px; padding: 1px; background: #f6f5ef; }
.vscroll.slim { width: 24px; }
.sb { flex: none; display: grid; place-items: center; width: 100%; height: 33px; border: 1px solid #fff; border-bottom: 3px double #8ba5dd; border-radius: 3px; background: linear-gradient(90deg, #cddafb, #b4c7f4); }
.sb svg { width: 16px; height: 20px; }
.thumb {
  border: 1px solid #98addf; border-radius: 3px;
  background: repeating-linear-gradient(#eef4fe 0 2px, #8ca6e0 2px 4px) center / 9px 16px no-repeat, linear-gradient(90deg, #cbd8fc, #b7c6fa);
}
.end { margin-top: auto; }
.t-pal { flex: 0 0 49%; }
.t-view { height: 74px; margin-top: 531px; }
.t-dlg { flex: 1; }
.t-dlg + .end { margin-top: 33px; }

.view { flex: 1; min-width: 0; display: grid; grid-template-columns: 1fr 24px; grid-template-rows: 1fr 35px; }
.canvas { background: #000; min-height: 0; overflow: hidden; }
.hscroll { display: flex; align-items: center; padding: 1px; background: #f8f7f2; }
.hscroll .sb { width: 25px; height: 32px; }
.thumb.h { width: 91px; height: 32px; margin-left: 813px; background: repeating-linear-gradient(90deg, #eef4fe 0 2px, #8ca6e0 2px 4px) center / 14px 12px no-repeat, linear-gradient(#cbd8fc, #b7c6fa); }
.hscroll .end { margin: 0 0 0 auto; }

.status { flex: none; display: flex; align-items: center; height: 38px; padding: 4px 0 0 7px; }
.status p { flex: 1; }
.status span { height: 28px; padding-left: 11px; line-height: 26px; border-left: 1px solid #b9b5a6; white-space: nowrap; }
.status .s1 { width: 172px; padding-left: 10px; }
.s2 { width: 96px; color: #d96a5c; }
.s3 { width: 181px; }
.s5 { width: 46px; }
.s6 { width: 55px; }
.s7 { width: 118px; }

/* floating properties window */
.dialog {
  position: absolute; left: 217px; top: 330px; width: 546px; padding: 0 5px 7px; border-radius: 10px 10px 0 0;
  background: #0a3fc4; box-shadow: inset 0 0 0 2px #0b2f9c;
}
.dlg-title {
  display: flex; align-items: center; gap: 4px; height: 63px; margin: 0 -5px; padding: 6px 8px 0 9px; border-radius: 10px 10px 0 0;
  background: linear-gradient(#3a86f4 0, #0c5ce4 14%, #0553dc 50%, #0a66fa 85%, #0443c0 100%);
}
.dlg-title .app-icon { height: 30px; }
.dlg-title h2 { flex: 1; padding-top: 2px; color: #fff; font-size: 24px; line-height: 32px; font-weight: bold; text-shadow: 1px 1px #0a2f8c; }
.dlg-title .wb { border-color: #dfe8fb; width: 30px; }
.dlg-title .close { width: 32px; }
.dlg-body { padding: 24px 18px 26px 16px; background: var(--face); }
.lead { height: 40px; line-height: 26px; }
.tabs { display: flex; align-items: flex-end; }
.tab { height: 41px; margin-bottom: -1px; border: 1px solid #8f9ba0; border-radius: 4px 4px 0 0; background: linear-gradient(#fff, #efeee6); width: 82px; }
.tab.active { width: 102px; height: 45px; border-top: 5px solid #e39145; border-bottom: 0; background: #fcfcfa; position: relative; }
.panel { width: 500px; padding: 22px 15px 21px; border: 1px solid #8f9ba0; box-shadow: 1px 2px 2px #a8a594; background: linear-gradient(#fcfcfa, #f2f1ea); }
.props { display: flex; height: 478px; border: 2px solid var(--edge); background: #fff; }
.props-main { flex: 1; }
.props table { width: 100%; border-collapse: collapse; table-layout: fixed; }
.cn { width: 216px; }
.props th { height: 45px; padding: 0 5px; text-align: left; font-weight: normal; background: var(--face); border-right: 1px solid #c4c0b0; }
.props tbody td { height: 35px; padding: 0 0 0 5px; white-space: nowrap; line-height: 24px; }
.props tbody tr:nth-child(3n) td { height: 36px; }
.props tbody .grp td { padding-left: 32px; background: #a39e8f; font-size: 22px; font-weight: bold; }
.alt { background: #e0e0e1; }
.props tbody .l1 { padding-left: 32px; }
.props tbody .l2 { padding-left: 62px; }
.props tbody .node { padding-left: 7px; }
.tog { width: 14px; height: 18px; margin-right: 11px; vertical-align: -3px; border: 2px solid #8a979e; background: linear-gradient(#222, #222) center / 7px 2px no-repeat, linear-gradient(#fff, #ccc); }
.props tbody .edit .l2 { color: #e8f4ff; background: linear-gradient(90deg, #fff 60px, #316ab8 60px); }
.props tbody .edit td + td { padding: 0; }
.field { display: flex; align-items: center; height: 35px; padding-left: 5px; border: 1px solid #6f7a80; background: #fff; }
.field input { width: 24px; border: 0; outline: 0; background: none; field-sizing: content; }
.field i { width: 1px; height: 27px; background: #000; }
.desc { height: 73px; margin-top: 13px; padding: 8px 3px; border: 2px solid var(--edge); background: #fdfdfd; }
.actions { display: flex; gap: 12px; margin-top: 20px; }
.actions button { flex: 1; height: 48px; border: 2px solid #2b4c66; border-radius: 5px; background: linear-gradient(#fff, #f4f3ec 70%, #dfdccf); }
.actions .default { box-shadow: inset 0 0 0 2px #9db8ec; }
```
